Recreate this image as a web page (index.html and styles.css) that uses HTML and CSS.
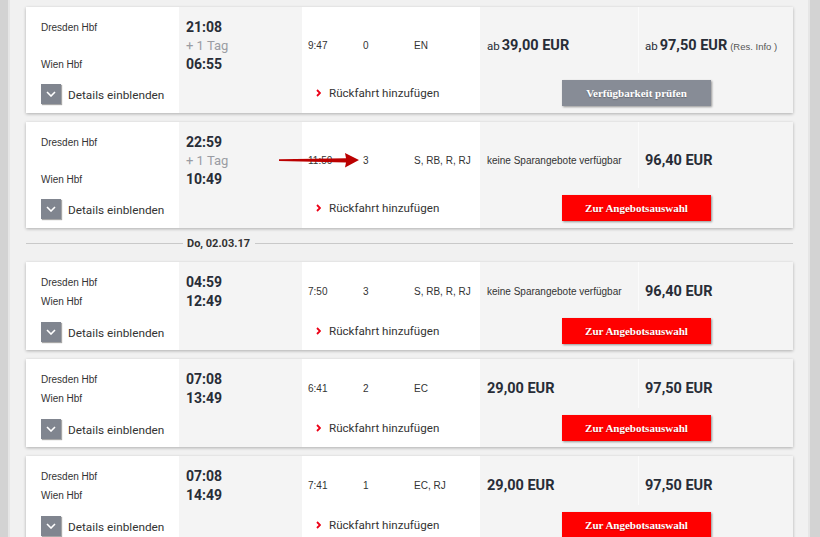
FILE: index.html
```html
<!DOCTYPE html>
<html lang="de">
<head>
    <meta charset="UTF-8">
    <title>Verbindungen Dresden Hbf - Wien Hbf</title>
    <link rel="stylesheet" href="styles.css">
</head>
<body>
    <div class="frame">
        <div class="edge edge-left"></div>

        <div class="results">
            <!-- Verbindung 1 -->
            <div class="trip overnight">
                <div class="stations">
                    <div>Dresden Hbf</div>
                    <div class="spacer"></div>
                    <div>Wien Hbf</div>
                </div>
                <div class="times">
                    <div class="time">21:08</div>
                    <div class="plus-day">+ 1 Tag</div>
                    <div class="time">06:55</div>
                </div>
                <div class="connection">
                    <span class="duration">9:47</span>
                    <span class="changes">0</span>
                    <span class="products">EN</span>
                </div>
                <div class="fare">
                    <span class="from">ab</span><span class="price">39,00 EUR</span>
                </div>
                <div class="fare fare-flex">
                    <span class="from">ab</span><span class="price">97,50 EUR</span><span class="res-info">(Res. Info )</span>
                </div>
                <div class="details">
                    <span class="toggle"><svg width="10" height="6" viewBox="0 0 10 6"><polyline points="1,1 5,5 9,1" fill="none" stroke="#fff" stroke-width="1.6"/></svg></span>Details einblenden
                </div>
                <div class="return">
                    <svg class="chev" width="5" height="8" viewBox="0 0 5 8"><polyline points="1,1 4,4 1,7" fill="none" stroke="#ec0016" stroke-width="1.8"/></svg>Rückfahrt hinzufügen
                </div>
                <div class="actions">
                    <button class="btn btn-grey">Verfügbarkeit prüfen</button>
                </div>
            </div>

            <!-- Verbindung 2 (mit Markierung) -->
            <div class="trip overnight">
                <div class="stations">
                    <div>Dresden Hbf</div>
                    <div class="spacer"></div>
                    <div>Wien Hbf</div>
                </div>
                <div class="times">
                    <div class="time">22:59</div>
                    <div class="plus-day">+ 1 Tag</div>
                    <div class="time">10:49</div>
                </div>
                <div class="connection">
                    <span class="duration">11:50</span>
                    <span class="changes">3</span>
                    <span class="products">S, RB, R, RJ</span>
                </div>
                <div class="fare">
                    <span class="note">keine Sparangebote verfügbar</span>
                </div>
                <div class="fare fare-flex">
                    <span class="price">96,40 EUR</span>
                </div>
                <div class="details">
                    <span class="toggle"><svg width="10" height="6" viewBox="0 0 10 6"><polyline points="1,1 5,5 9,1" fill="none" stroke="#fff" stroke-width="1.6"/></svg></span>Details einblenden
                </div>
                <div class="return">
                    <svg class="chev" width="5" height="8" viewBox="0 0 5 8"><polyline points="1,1 4,4 1,7" fill="none" stroke="#ec0016" stroke-width="1.8"/></svg>Rückfahrt hinzufügen
                </div>
                <div class="actions">
                    <button class="btn btn-red">Zur Angebotsauswahl</button>
                </div>
                <svg class="marker" width="80" height="15" viewBox="0 0 80 15">
                    <polygon points="0,6.3 67,5.2 66,0 80,7 66,14.5 67,9.6 0,8.1" fill="#bb0000"/>
                </svg>
            </div>

            <div class="day">Do, 02.03.17</div>

            <!-- Verbindung 3 -->
            <div class="trip">
                <div class="stations">
                    <div>Dresden Hbf</div>
                    <div>Wien Hbf</div>
                </div>
                <div class="times">
                    <div class="time">04:59</div>
                    <div class="time">12:49</div>
                </div>
                <div class="connection">
                    <span class="duration">7:50</span>
                    <span class="changes">3</span>
                    <span class="products">S, RB, R, RJ</span>
                </div>
                <div class="fare">
                    <span class="note">keine Sparangebote verfügbar</span>
                </div>
                <div class="fare fare-flex">
                    <span class="price">96,40 EUR</span>
                </div>
                <div class="details">
                    <span class="toggle"><svg width="10" height="6" viewBox="0 0 10 6"><polyline points="1,1 5,5 9,1" fill="none" stroke="#fff" stroke-width="1.6"/></svg></span>Details einblenden
                </div>
                <div class="return">
                    <svg class="chev" width="5" height="8" viewBox="0 0 5 8"><polyline points="1,1 4,4 1,7" fill="none" stroke="#ec0016" stroke-width="1.8"/></svg>Rückfahrt hinzufügen
                </div>
                <div class="actions">
                    <button class="btn btn-red">Zur Angebotsauswahl</button>
                </div>
            </div>

            <!-- Verbindung 4 -->
            <div class="trip">
                <div class="stations">
                    <div>Dresden Hbf</div>
                    <div>Wien Hbf</div>
                </div>
                <div class="times">
                    <div class="time">07:08</div>
                    <div class="time">13:49</div>
                </div>
                <div class="connection">
                    <span class="duration">6:41</span>
                    <span class="changes">2</span>
                    <span class="products">EC</span>
                </div>
                <div class="fare">
                    <span class="price">29,00 EUR</span>
                </div>
                <div class="fare fare-flex">
                    <span class="price">97,50 EUR</span>
                </div>
                <div class="details">
                    <span class="toggle"><svg width="10" height="6" viewBox="0 0 10 6"><polyline points="1,1 5,5 9,1" fill="none" stroke="#fff" stroke-width="1.6"/></svg></span>Details einblenden
                </div>
                <div class="return">
                    <svg class="chev" width="5" height="8" viewBox="0 0 5 8"><polyline points="1,1 4,4 1,7" fill="none" stroke="#ec0016" stroke-width="1.8"/></svg>Rückfahrt hinzufügen
                </div>
                <div class="actions">
                    <button class="btn btn-red">Zur Angebotsauswahl</button>
                </div>
            </div>

            <!-- Verbindung 5 -->
            <div class="trip">
                <div class="stations">
                    <div>Dresden Hbf</div>
                    <div>Wien Hbf</div>
                </div>
                <div class="times">
                    <div class="time">07:08</div>
                    <div class="time">14:49</div>
                </div>
                <div class="connection">
                    <span class="duration">7:41</span>
                    <span class="changes">1</span>
                    <span class="products">EC, RJ</span>
                </div>
                <div class="fare">
                    <span class="price">29,00 EUR</span>
                </div>
                <div class="fare fare-flex">
                    <span class="price">97,50 EUR</span>
                </div>
                <div class="details">
                    <span class="toggle"><svg width="10" height="6" viewBox="0 0 10 6"><polyline points="1,1 5,5 9,1" fill="none" stroke="#fff" stroke-width="1.6"/></svg></span>Details einblenden
                </div>
                <div class="return">
                    <svg class="chev" width="5" height="8" viewBox="0 0 5 8"><polyline points="1,1 4,4 1,7" fill="none" stroke="#ec0016" stroke-width="1.8"/></svg>Rückfahrt hinzufügen
                </div>
                <div class="actions">
                    <button class="btn btn-red">Zur Angebotsauswahl</button>
                </div>
            </div>
        </div>

        <div class="edge edge-right"></div>
    </div>
</body>
</html>
```

FILE: styles.css
```css
html, body {
    margin: 0;
    height: 100%;
    overflow: hidden;
}
body {
    font-family: 'Liberation Sans', Arial, sans-serif;
    font-size: 10px;
    color: #333;
    background-color: #f1f1f1;
}
.frame {
    display: flex;
    height: 100%;
}
.edge {
    flex: none;
    background-color: #d3d3d3;
}
.edge-left {
    width: 8px;
    border-right: 2px solid #e6e6e6;
}
.edge-right {
    width: 10px;
    border-left: 2px solid #e6e6e6;
}
.results {
    flex: 1;
    padding: 7px 15px 0 16px;
}
.trip {
    position: relative;
    display: grid;
    grid-template-columns: 153px 123px 178px 158px 155px;
    grid-template-rows: 49px 39px;
    background-color: #fff;
    box-shadow: 0 1px 3px rgba(0,0,0,0.28);
    margin-bottom: 9px;
}
.trip.overnight {
    grid-template-rows: 66px 40px;
}
.stations {
    grid-column: 1;
    grid-row: 1;
    padding: 11px 0 0 15px;
    line-height: 19px;
}
.spacer {
    height: 18px;
}
.times {
    grid-column: 2;
    grid-row: 1 / span 2;
    background-color: #f4f4f4;
    padding: 11px 0 0 7px;
    font-family: Roboto, sans-serif;
}
.time {
    font-size: 14px;
    font-weight: bold;
    line-height: 19px;
    color: #282d37;
}
.plus-day {
    font-size: 13px;
    line-height: 18px;
    color: #9a9ca3;
}
.connection {
    grid-column: 3;
    grid-row: 1;
    display: flex;
    align-items: center;
    padding: 10px 0 0 6px;
}
.duration {
    width: 55px;
}
.changes {
    width: 51px;
}
.fare {
    grid-column: 4;
    grid-row: 1;
    display: flex;
    align-items: center;
    padding: 10px 0 0 7px;
    background-color: #f4f4f4;
    font-family: Roboto, sans-serif;
    color: #282d37;
}
.fare-flex {
    grid-column: 5;
    border-left: 1px solid #fbfbfb;
    padding-left: 6px;
}
.from {
    font-size: 11.5px;
    margin-right: 2px;
    padding-top: 2px;
}
.price {
    font-size: 14.5px;
    font-weight: bold;
}
.res-info {
    font-family: 'Liberation Sans', Arial, sans-serif;
    font-size: 9.5px;
    color: #555;
    margin-left: 3px;
    padding-top: 2px;
}
.note {
    font-family: 'Liberation Sans', Arial, sans-serif;
    font-size: 10px;
    color: #333;
}
.details {
    grid-column: 1;
    grid-row: 2;
    display: flex;
    align-items: flex-start;
    padding: 11px 0 0 15px;
    font-family: Roboto, sans-serif;
    font-size: 11.8px;
    line-height: 22px;
    color: #333;
    white-space: nowrap;
}
.toggle {
    width: 20px;
    height: 20px;
    margin-right: 7px;
    background-color: #80858f;
    box-shadow: 1px 1px 1px rgba(0,0,0,0.35);
    display: flex;
    align-items: center;
    justify-content: center;
}
.return {
    grid-column: 3;
    grid-row: 2;
    display: flex;
    align-items: center;
    padding: 0 0 0 14px;
    font-family: Roboto, sans-serif;
    font-size: 11.6px;
    color: #333;
}
.chev {
    margin-right: 8px;
}
.actions {
    grid-column: 4 / span 2;
    grid-row: 2;
    background-color: #f4f4f4;
    display: flex;
    justify-content: center;
    align-items: flex-start;
    padding-top: 7px;
}
.btn {
    width: 149px;
    height: 26px;
    border: none;
    font-family: 'Liberation Serif', 'Times New Roman', serif;
    font-size: 11px;
    font-weight: bold;
    color: #fff;
    text-shadow: 0 1px 1px rgba(0,0,0,0.25);
    box-shadow: 1px 1px 2px rgba(0,0,0,0.4);
    cursor: pointer;
    padding: 0;
}
.btn-grey {
    background-color: #878c96;
}
.btn-red {
    background-color: #ff0000;
}
.marker {
    position: absolute;
    left: 253px;
    top: 31px;
}
.day {
    display: flex;
    align-items: center;
    height: 16px;
    margin: -2px 0 11px;
    font-family: Roboto, sans-serif;
    font-size: 11px;
    font-weight: bold;
    color: #333;
}
.day::before,
.day::after {
    content: '';
    height: 1px;
    background-color: #c9c9c9;
}
.day::before {
    width: 157px;
    margin-right: 4px;
}
.day::after {
    flex: 1;
    margin-left: 5px;
}
```
